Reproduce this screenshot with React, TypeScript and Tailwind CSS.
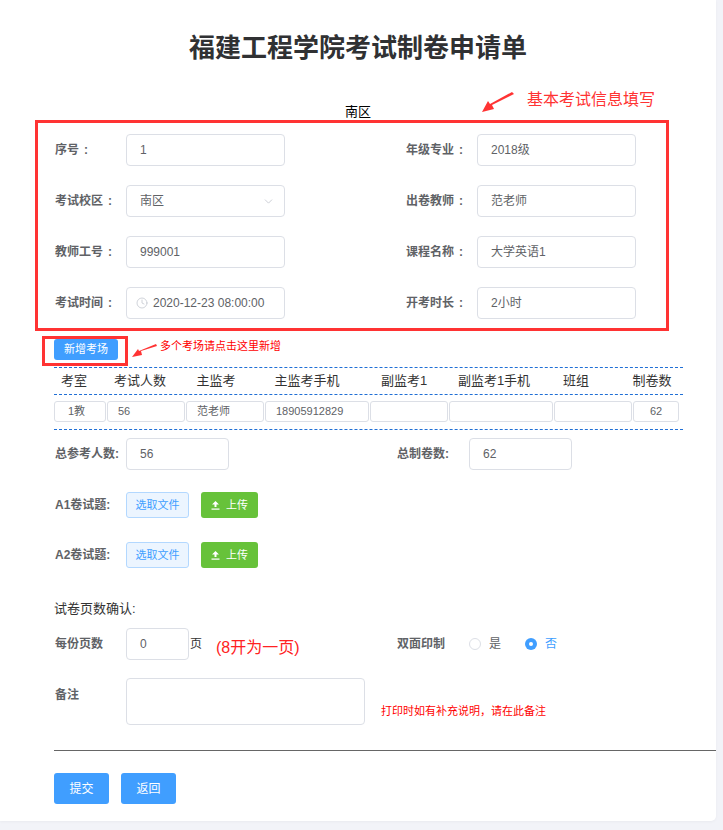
import React from 'react';
import { ChevronDown, Clock } from 'lucide-react';

const inputBox =
  'h-[32px] border border-[#dcdfe6] rounded-[4px] bg-white flex items-center text-[12px] text-[#606266]';

const Label = ({ text }: { text: string }) => (
  <span className="w-[72px] pl-px text-[12px] font-bold text-[#606266] whitespace-nowrap">
    {text}
    <span className="ml-[5px]">:</span>
  </span>
);

const Field = ({ label, children }: { label: string; children: React.ReactNode }) => (
  <div className="flex items-center">
    <Label text={label} />
    <div className={`${inputBox} w-[159px] px-[13px]`}>{children}</div>
  </div>
);

const cols = [
  { name: '考室', w: 'w-[52px]', pr: 'pr-[12px]', value: '1教' },
  { name: '考试人数', w: 'w-[78px]', pr: 'pr-[12px]', value: '56' },
  { name: '主监考', w: 'w-[78px]', pr: 'pr-[18px]', value: '范老师' },
  { name: '主监考手机', w: 'w-[104px]', pr: 'pr-[20px]', value: '18905912829' },
  { name: '副监考1', w: 'w-[78px]', pr: 'pr-[10px]', value: '' },
  { name: '副监考1手机', w: 'w-[104px]', pr: 'pr-[14px]', value: '' },
  { name: '班组', w: 'w-[78px]', pr: 'pr-[34px]', value: '' },
  { name: '制卷数', w: 'w-[46px]', pr: 'pr-[8px]', value: '62' },
];

const UploadIcon = () => (
  <svg width="9" height="10" viewBox="0 0 9 10" className="mr-[6px]">
    <path d="M4.5 1 L1 4.5 H3.5 V7 H5.5 V4.5 H8 Z" fill="white" />
    <rect x="0.5" y="8.5" width="8" height="1.2" fill="white" />
  </svg>
);

const FileRow = ({ label }: { label: string }) => (
  <div className="flex items-center">
    <span className="w-[72px] pl-px text-[12px] font-bold text-[#606266]">{label}</span>
    <div className="w-[63px] h-[26px] rounded-[3px] border border-[#b3d8ff] bg-[#ecf5ff] text-[#409eff] text-[11px] flex items-center justify-center">
      选取文件
    </div>
    <div className="ml-[12px] w-[57px] h-[26px] rounded-[3px] bg-[#67c23a] text-white text-[11px] flex items-center justify-center">
      <UploadIcon />
      上传
    </div>
  </div>
);

export default function App() {
  return (
    <div
      lang="zh-CN"
      className="min-h-[830px] bg-[#f2f3f8] font-['Liberation_Sans','Noto_Sans_CJK_SC',sans-serif]"
    >
      <div className="relative w-[716px] h-[821px] bg-white rounded-br-[5px] shadow-[0_1px_3px_rgba(0,0,0,0.04)]">
        {/* Title */}
        <div className="pt-[30px] h-[66px] leading-[36px] text-center text-[26px] font-bold text-[#303133]">
          福建工程学院考试制卷申请单
        </div>
        <div className="mt-[37px] h-[18px] leading-[18px] text-center text-[13px] text-black">南区</div>

        <div className="pl-[54px]">
          {/* Basic info */}
          <div className="mt-[13px] grid grid-cols-[351px_231px] gap-y-[19px]">
            <Field label="序号">1</Field>
            <Field label="年级专业">2018级</Field>
            <div className="flex items-center">
              <Label text="考试校区" />
              <div className={`${inputBox} w-[159px] pl-[13px] pr-[9px] justify-between`}>
                <span>南区</span>
                <ChevronDown className="w-[13px] h-[13px] text-[#c0c4cc]" strokeWidth={1.5} />
              </div>
            </div>
            <Field label="出卷教师">范老师</Field>
            <Field label="教师工号">999001</Field>
            <Field label="课程名称">大学英语1</Field>
            <div className="flex items-center">
              <Label text="考试时间" />
              <div className={`${inputBox} w-[159px] pl-[9px]`}>
                <Clock className="w-[12px] h-[12px] text-[#c0c4cc]" strokeWidth={1.5} />
                <span className="ml-[5px]">2020-12-23 08:00:00</span>
              </div>
            </div>
            <Field label="开考时长">2小时</Field>
          </div>

          {/* Add exam room */}
          <div className="mt-[20px] w-[64px] h-[21px] rounded-[3px] bg-[#409eff] text-white text-[11px] flex items-center justify-center">
            新增考场
          </div>

          {/* Exam rooms table */}
          <div className="mt-[7px] w-[629px] border-t border-b border-dashed border-[#1f6fd6]">
            <div className="h-[27px] flex border-b border-dashed border-[#1f6fd6] text-[13px] text-[#333]">
              {cols.map((c, i) => (
                <div
                  key={c.name}
                  className={`${c.w} ${c.pr} ${i > 0 ? 'ml-[1px]' : ''} flex items-center justify-center whitespace-nowrap`}
                >
                  {c.name}
                </div>
              ))}
            </div>
            <div className="pt-[6px] pb-[7px] flex">
              {cols.map((c, i) => (
                <div
                  key={c.name}
                  className={`${c.w} ${i > 0 ? 'ml-[1px]' : ''} h-[21px] border border-[#dcdfe6] rounded-[3px] text-[11px] text-[#606266] flex items-center ${
                    i === cols.length - 1 ? 'justify-center' : i === 0 ? 'pl-[13px]' : 'pl-[10px]'
                  }`}
                >
                  {c.value}
                </div>
              ))}
            </div>
          </div>

          {/* Totals */}
          <div className="mt-[8px] flex items-center">
            <div className="w-[343px] flex items-center">
              <span className="w-[72px] pl-px text-[12px] font-bold text-[#606266]">总参考人数:</span>
              <div className={`${inputBox} h-[31px] w-[103px] px-[13px]`}>56</div>
            </div>
            <span className="w-[72px] text-[12px] font-bold text-[#606266]">总制卷数:</span>
            <div className={`${inputBox} h-[31px] w-[103px] px-[13px]`}>62</div>
          </div>

          <div className="mt-[22px]">
            <FileRow label="A1卷试题:" />
          </div>
          <div className="mt-[24px]">
            <FileRow label="A2卷试题:" />
          </div>

          <div className="mt-[32px] h-[18px] leading-[18px] text-[13px] text-[#333]">试卷页数确认:</div>

          {/* Pages */}
          <div className="mt-[10px] h-[31px] flex items-center">
            <div className="w-[343px] flex items-center">
              <span className="w-[72px] pl-px text-[12px] font-bold text-[#606266]">每份页数</span>
              <div className={`${inputBox} h-[31px] w-[63px] px-[13px]`}>0</div>
              <span className="ml-px text-[12px] text-[#333]">页</span>
              <span className="relative top-[4px] ml-[14px] text-[16px] leading-[20px] text-[#f22]">(8开为一页)</span>
            </div>
            <span className="w-[72px] text-[12px] font-bold text-[#606266]">双面印制</span>
            <span className="w-[12px] h-[12px] rounded-full border border-[#dcdfe6] bg-white" />
            <span className="ml-[8px] text-[12px] text-[#606266]">是</span>
            <span className="ml-[24px] w-[12px] h-[12px] rounded-full bg-[#409eff] flex items-center justify-center">
              <span className="w-[4px] h-[4px] rounded-full bg-white" />
            </span>
            <span className="ml-[8px] text-[12px] text-[#409eff]">否</span>
          </div>

          {/* Remarks */}
          <div className="mt-[19px] flex items-start">
            <span className="w-[72px] pl-px pt-[8px] text-[12px] font-bold text-[#606266]">备注</span>
            <div className="w-[239px] h-[47px] border border-[#dcdfe6] rounded-[4px] bg-white" />
            <span className="ml-[16px] mt-[26px] text-[11px] leading-[14px] text-[#f00]">
              打印时如有补充说明，请在此备注
            </span>
          </div>

          <div className="mt-[25px] border-t border-[#666]" />

          <div className="mt-[22px] flex gap-[12px]">
            <div className="w-[55px] h-[31px] rounded-[3px] bg-[#409eff] text-white text-[12px] flex items-center justify-center">
              提交
            </div>
            <div className="w-[55px] h-[31px] rounded-[3px] bg-[#409eff] text-white text-[12px] flex items-center justify-center">
              返回
            </div>
          </div>
        </div>

        {/* Annotations */}
        <div className="absolute left-[35px] top-[120px] w-[634px] h-[211px] border-[3px] border-[#f33]" />
        <div className="absolute left-[42px] top-[336px] w-[86px] h-[30px] border-[3px] border-[#f33]" />
        <svg className="absolute left-[478px] top-[88px]" width="40" height="30" viewBox="0 0 40 30">
          <polygon points="34,4 36,6 14,17 16,21 4,24 10,13 12,16" fill="#f33" />
        </svg>
        <svg className="absolute left-[128px] top-[340px]" width="32" height="22" viewBox="0 0 32 22">
          <polygon points="28,4 29,6 13,11 14,15 4,17 10,9 11,11" fill="#f33" />
        </svg>
        <div className="absolute left-[527px] top-[89px] text-[16px] leading-[22px] text-[#f33]">基本考试信息填写</div>
        <div className="absolute left-[160px] top-[339px] text-[11px] leading-[14px] text-[#f00]">多个考场请点击这里新增</div>
      </div>
    </div>
  );
}
